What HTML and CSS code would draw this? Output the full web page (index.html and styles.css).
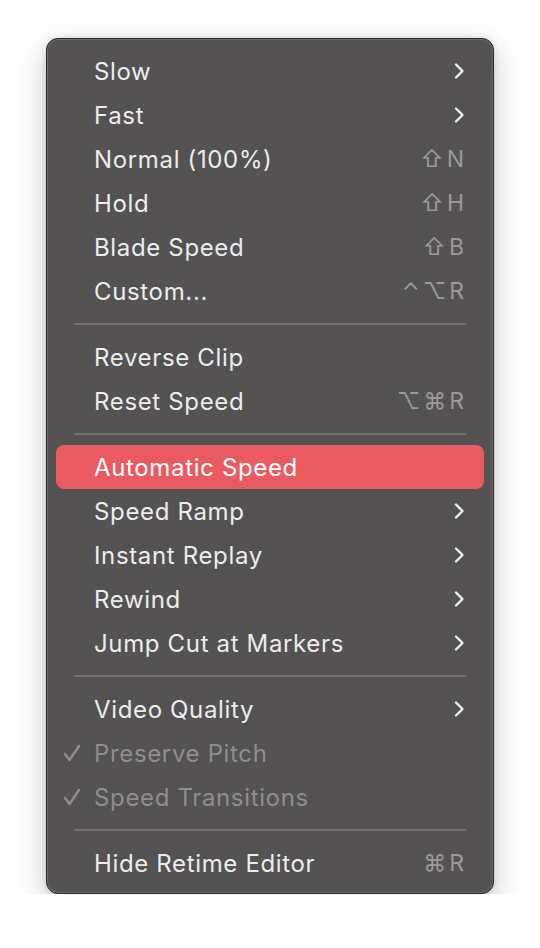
FILE: index.html
```html
<!DOCTYPE html>
<html>
<head>
<meta charset="utf-8">
<link rel="stylesheet" href="styles.css">
</head>
<body>
<div class="menu">
  <div class="item"><span class="check"></span><span class="label">Slow</span><svg class="chev" viewBox="0 0 12 18"><path d="M3 2.5 L9.5 9 L3 15.5"/></svg></div>
  <div class="item"><span class="check"></span><span class="label">Fast</span><svg class="chev" viewBox="0 0 12 18"><path d="M3 2.5 L9.5 9 L3 15.5"/></svg></div>
  <div class="item"><span class="check"></span><span class="label">Normal (100%)</span><span class="key">⇧N</span></div>
  <div class="item"><span class="check"></span><span class="label">Hold</span><span class="key">⇧H</span></div>
  <div class="item"><span class="check"></span><span class="label">Blade Speed</span><span class="key">⇧B</span></div>
  <div class="item"><span class="check"></span><span class="label">Custom...</span><span class="key">⌃⌥R</span></div>
  <div class="sep"></div>
  <div class="item"><span class="check"></span><span class="label">Reverse Clip</span></div>
  <div class="item"><span class="check"></span><span class="label">Reset Speed</span><span class="key">⌥⌘R</span></div>
  <div class="sep"></div>
  <div class="item active"><span class="check"></span><span class="label">Automatic Speed</span></div>
  <div class="item"><span class="check"></span><span class="label">Speed Ramp</span><svg class="chev" viewBox="0 0 12 18"><path d="M3 2.5 L9.5 9 L3 15.5"/></svg></div>
  <div class="item"><span class="check"></span><span class="label">Instant Replay</span><svg class="chev" viewBox="0 0 12 18"><path d="M3 2.5 L9.5 9 L3 15.5"/></svg></div>
  <div class="item"><span class="check"></span><span class="label">Rewind</span><svg class="chev" viewBox="0 0 12 18"><path d="M3 2.5 L9.5 9 L3 15.5"/></svg></div>
  <div class="item"><span class="check"></span><span class="label">Jump Cut at Markers</span><svg class="chev" viewBox="0 0 12 18"><path d="M3 2.5 L9.5 9 L3 15.5"/></svg></div>
  <div class="sep"></div>
  <div class="item"><span class="check"></span><span class="label">Video Quality</span><svg class="chev" viewBox="0 0 12 18"><path d="M3 2.5 L9.5 9 L3 15.5"/></svg></div>
  <div class="item disabled"><span class="check"><svg class="tick" viewBox="0 0 18 18"><path d="M2 10 L6.5 16 L16 2"/></svg></span><span class="label">Preserve Pitch</span></div>
  <div class="item disabled"><span class="check"><svg class="tick" viewBox="0 0 18 18"><path d="M2 10 L6.5 16 L16 2"/></svg></span><span class="label">Speed Transitions</span></div>
  <div class="sep"></div>
  <div class="item"><span class="check"></span><span class="label">Hide Retime Editor</span><span class="key">⌘R</span></div>
</div>
</body>
</html>
```
FILE: styles.css
```css
html, body {
  margin: 0;
  padding: 0;
  background: #ffffff;
}
body {
  font-family: "Inter", "Liberation Sans", sans-serif;
}
.menu {
  margin: 38px 0 0 46px;
  width: 446px;
  box-sizing: content-box;
  padding: 10px 0 8px 0;
  background: #545253;
  border: 1px solid #2c2b2c;
  border-radius: 12px;
  box-shadow: inset 0 0 0 1px #6e6c6d, 0 10px 30px rgba(0,0,0,0.22), 0 0 6px rgba(0,0,0,0.12);
}
.item {
  display: flex;
  align-items: center;
  height: 44px;
  margin: 0 9px;
  padding: 0 20px 0 8px;
  border-radius: 8px;
  color: #ececec;
  font-size: 24px;
  letter-spacing: 0.65px;
}
.item.active {
  background: #ea5a61;
  color: #ffffff;
}
.item.disabled {
  color: #8f8d8e;
}
.check {
  width: 30px;
  flex: none;
  display: flex;
  align-items: center;
}
.tick {
  width: 18px;
  height: 18px;
  margin-left: -1px;
  fill: none;
  stroke: #8f8d8e;
  stroke-width: 2.4;
  stroke-linecap: round;
  stroke-linejoin: round;
}
.label {
  flex: 1;
}
.key {
  color: #9b999a;
  font-size: 23px;
  letter-spacing: 3px;
  margin-right: -3px;
}
.chev {
  width: 12px;
  height: 18px;
  margin-right: -1px;
  fill: none;
  stroke: #ececec;
  stroke-width: 2.4;
  stroke-linecap: round;
  stroke-linejoin: round;
}
.sep {
  height: 22px;
  display: flex;
  align-items: center;
  margin: 0 27px;
}
.sep::before {
  content: "";
  display: block;
  width: 100%;
  height: 1.5px;
  background: #716f70;
}
```
